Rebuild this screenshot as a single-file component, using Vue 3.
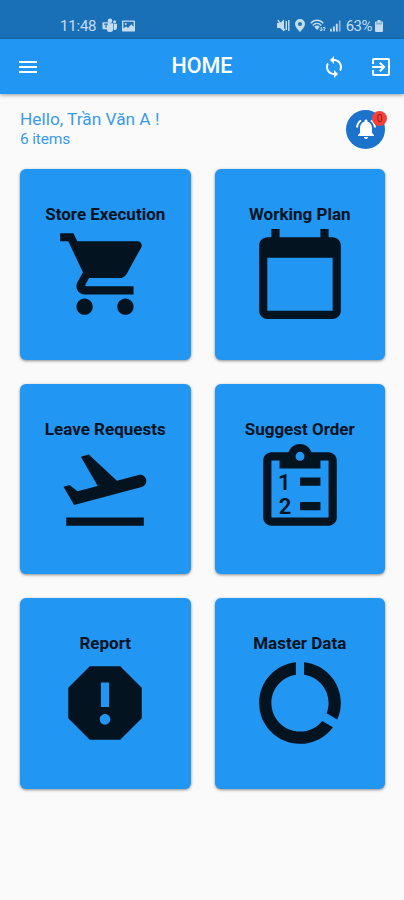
<template>
  <div class="home-page">
    <div class="status-bar">
      <div class="status-left">
        <span class="clock">11:48</span>
        <svg class="teams" viewBox="0 0 16 16">
          <circle cx="8.5" cy="3" r="2.4" />
          <circle cx="13.4" cy="4" r="1.6" />
          <path d="M5 5.6h7v6a3.6 3.6 0 0 1-7 1z" />
          <path d="M12.6 6.2H16v4.3a2.3 2.3 0 0 1-3.4 2z" />
          <rect x="0.5" y="4.5" width="7.5" height="7.5" rx="1" />
          <path class="teams-mark" d="M2.3 6.5h4M4.3 6.5v4" />
        </svg>
        <svg class="photo" viewBox="0 0 14 12">
          <path fill-rule="evenodd" d="M1 0h12a1 1 0 0 1 1 1v10a1 1 0 0 1-1 1H1a1 1 0 0 1-1-1V1a1 1 0 0 1 1-1zm.5 1.5v7l3-2 2 1.6 3.5-4 2.5 2.6V1.5z" />
          <circle cx="4" cy="3.8" r="1.1" />
        </svg>
      </div>
      <div class="status-right">
        <svg class="mute" viewBox="0 0 13 13">
          <path d="M0 4h3l4-3.5v12L3 9H0z" />
          <path class="line" d="M0.8 0.8l7 10.5M9.3 2v9M11.8 1v11" />
        </svg>
        <svg class="pin" viewBox="0 0 10 13">
          <path fill-rule="evenodd" d="M5 0a5 5 0 0 1 5 5c0 3.4-5 8-5 8S0 8.4 0 5a5 5 0 0 1 5-5zm0 3a2 2 0 1 0 0 4 2 2 0 0 0 0-4z" />
        </svg>
        <svg class="wifi" viewBox="0 0 16 13">
          <path class="line" d="M0.8 4.2C4.2.3 9.8.3 13.2 4.2M2.7 6.4c2.5-2.7 6.1-2.7 8.6 0" />
          <path d="M4.2 7.7c1.8-1.6 3.8-1.6 5.6 0L7 11z" />
          <path class="line thin" d="M11.2 8v4M9.7 10.5l1.5 1.5 1.3-1.5M14.2 12V8M12.9 9.4L14.2 8l1.4 1.4" />
        </svg>
        <svg class="signal" viewBox="0 0 12 12">
          <rect x="0" y="9" width="2" height="3" />
          <rect x="3.2" y="6.5" width="2" height="5.5" />
          <rect x="6.4" y="3.5" width="2" height="8.5" />
          <rect class="faint" x="9.6" y="0" width="2" height="12" />
        </svg>
        <span class="battery-text">63%</span>
        <svg class="battery" viewBox="0 0 8 12">
          <path d="M2.5 0h3v1.5H7a1 1 0 0 1 1 1V11a1 1 0 0 1-1 1H1a1 1 0 0 1-1-1V2.500a1 1 0 0 1 1-1h1.500z" />
          <path class="battery-gap" d="M1 2.500h6v2H1z" />
        </svg>
      </div>
    </div>

    <header class="app-bar">
      <svg class="bar-icon" viewBox="0 0 24 24"><path :d="icons.menu" /></svg>
      <h1>HOME</h1>
      <div class="actions">
        <svg class="bar-icon" viewBox="0 0 24 24"><path :d="icons.sync" /></svg>
        <svg class="bar-icon" viewBox="0 0 24 24"><path :d="icons.exit" /></svg>
      </div>
    </header>

    <section class="greeting">
      <div>
        <div class="hello">Hello, {{ userName }} !</div>
        <div class="count">{{ cards.length }} items</div>
      </div>
      <button class="bell">
        <svg viewBox="0 0 24 24"><path :d="icons.bell" /></svg>
        <span class="badge">{{ unread }}</span>
      </button>
    </section>

    <main class="grid">
      <div v-for="card in cards" :key="card.title" class="card">
        <h2>{{ card.title }}</h2>
        <svg class="card-icon" viewBox="0 0 24 24">
          <path fill-rule="evenodd" :d="icons[card.icon]" />
          <template v-if="card.icon === 'order'">
            <text x="6.6" y="12.2">1</text>
            <text x="6.8" y="18.2">2</text>
          </template>
        </svg>
      </div>
    </main>
  </div>
</template>

<script setup>
import { ref } from 'vue'

const userName = ref('Trần Văn A')
const unread = ref(0)

const cards = [
  { title: 'Store Execution', icon: 'cart' },
  { title: 'Working Plan', icon: 'calendar' },
  { title: 'Leave Requests', icon: 'takeoff' },
  { title: 'Suggest Order', icon: 'order' },
  { title: 'Report', icon: 'report' },
  { title: 'Master Data', icon: 'usage' }
]

const icons = {
  menu: 'M3 18h18v-2H3v2zm0-5h18v-2H3v2zm0-7v2h18V6H3z',
  sync: 'M12 4V1L8 5l4 4V6c3.31 0 6 2.69 6 6 0 1.01-.25 1.97-.7 2.8l1.46 1.46C19.54 15.03 20 13.57 20 12c0-4.42-3.58-8-8-8zm0 14c-3.31 0-6-2.69-6-6 0-1.01.25-1.97.7-2.8L5.24 7.74C4.46 8.97 4 10.43 4 12c0 4.42 3.58 8 8 8v3l4-4-4-4v3z',
  exit: 'M10.09 15.59L11.5 17l5-5-5-5-1.41 1.41L12.67 11H3v2h9.67l-2.58 2.59zM19 3H5c-1.11 0-2 .9-2 2v4h2V5h14v14H5v-4H3v4c0 1.1.89 2 2 2h14c1.1 0 2-.9 2-2V5c0-1.1-.9-2-2-2z',
  bell: 'M7.58 4.08L6.15 2.65C3.75 4.48 2.17 7.3 2.03 10.5h2c.15-2.65 1.51-4.97 3.55-6.42zm12.39 6.42h2c-.15-3.2-1.73-6.02-4.12-7.85l-1.42 1.43c2.02 1.45 3.39 3.77 3.54 6.42zM18 11c0-3.07-1.64-5.64-4.5-6.32V4c0-.83-.67-1.5-1.5-1.5s-1.5.67-1.5 1.5v.68C7.63 5.36 6 7.92 6 11v5l-2 2v1h16v-1l-2-2v-5zm-6 11c.14 0 .27-.01.4-.04.65-.14 1.18-.58 1.44-1.18.1-.24.15-.5.15-.78h-4c.01 1.1.9 2 2.01 2z',
  cart: 'M7 18c-1.1 0-1.99.9-1.99 2S5.9 22 7 22s2-.9 2-2-.9-2-2-2zM1 2v2h2l3.6 7.59-1.35 2.45c-.16.28-.25.61-.25.96 0 1.1.9 2 2 2h12v-2H7.42c-.14 0-.25-.11-.25-.25l.03-.12.9-1.63h7.45c.75 0 1.41-.41 1.75-1.03l3.58-6.49c.08-.14.12-.31.12-.48 0-.55-.45-1-1-1H5.21l-.94-2H1zm16 16c-1.1 0-1.99.9-1.99 2s.89 2 1.99 2 2-.9 2-2-.9-2-2-2z',
  calendar: 'M20 3h-1V1h-2v2H7V1H5v2H4c-1.1 0-2 .9-2 2v16c0 1.1.9 2 2 2h16c1.1 0 2-.9 2-2V5c0-1.1-.9-2-2-2zm0 18H4V8h16v13z',
  takeoff: 'M2.5 19h19v2h-19zm19.57-9.36c-.21-.8-1.04-1.28-1.84-1.06L14.92 10l-6.9-6.43-1.93.51 4.14 7.17-4.97 1.33-1.97-1.54-1.45.39 1.82 3.16.77 1.33 1.6-.43 5.31-1.42 4.35-1.16L21 11.49c.81-.23 1.28-1.05 1.07-1.85z',
  order: 'M19 3h-4.18C14.4 1.84 13.3 1 12 1s-2.4.84-2.82 2H5c-1.1 0-2 .9-2 2v14c0 1.1.9 2 2 2h14c1.1 0 2-.9 2-2V5c0-1.1-.9-2-2-2zM12 2.9a1.1 1.1 0 1 1 0 2.2 1.1 1.1 0 0 1 0-2.2zM5 5h2v2h10V5h2v14H5zM12 9.2h5v2h-5zM12 15.2h5v2h-5z',
  report: 'M15.73 3H8.27L3 8.27v7.46L8.27 21h7.46L21 15.73V8.27L15.73 3zM12 17.3c-.72 0-1.3-.58-1.3-1.3 0-.72.58-1.3 1.3-1.3.72 0 1.3.58 1.3 1.3 0 .72-.58 1.3-1.3 1.3zm1-4.3h-2V7h2v6z',
  usage: 'M13 2.05v3.03c3.39.49 6 3.39 6 6.92 0 .9-.18 1.75-.48 2.54l2.6 1.53c.56-1.24.88-2.62.88-4.07 0-5.18-3.95-9.45-9-9.95zM12 19c-3.87 0-7-3.13-7-7 0-3.53 2.61-6.43 6-6.92V2.05c-5.06.5-9 4.76-9 9.95 0 5.52 4.47 10 9.99 10 3.31 0 6.24-1.61 8.06-4.09l-2.6-1.53C16.17 17.98 14.21 19 12 19z'
}
</script>

<style>
body {
  background: #fafafa;
}
</style>

<style scoped>
.home-page {
  width: 404px;
  height: 900px;
  overflow: hidden;
  background: #fafafa;
  font-family: Roboto, "Liberation Sans", sans-serif;
}

.status-bar {
  display: flex;
  justify-content: space-between;
  box-sizing: border-box;
  height: 39px;
  padding: 13px 21px 0 60px;
  background: #1a70b7;
  color: #c5dcef;
  font-size: 15px;
}

.status-bar svg {
  fill: #c5dcef;
}

.status-left,
.status-right {
  display: flex;
  align-items: center;
  height: 25px;
}

.clock {
  width: 37px;
  letter-spacing: -0.2px;
}

.teams {
  width: 15px;
  height: 15px;
  margin-left: 5px;
}

.status-bar .teams-mark {
  fill: none;
  stroke: #1a70b7;
  stroke-width: 1.2;
}

.photo {
  width: 13px;
  height: 12px;
  margin-left: 5px;
}

.status-bar .line {
  fill: none;
  stroke: #c5dcef;
  stroke-width: 1.4;
}

.status-bar .thin {
  stroke-width: 1;
}

.mute {
  width: 13px;
  height: 13px;
}

.pin {
  width: 10px;
  height: 13px;
  margin-left: 5px;
}

.wifi {
  width: 16px;
  height: 13px;
  margin-left: 5px;
}

.signal {
  width: 11px;
  height: 12px;
  margin-left: 4px;
}

.faint {
  opacity: 0.6;
}

.battery-text {
  margin-left: 5px;
  letter-spacing: -0.5px;
}

.battery {
  width: 8px;
  height: 12px;
  margin-left: 3px;
}

.status-bar .battery-gap {
  fill: #1a70b7;
  opacity: 0.4;
}

.app-bar {
  display: grid;
  grid-template-columns: 1fr auto 1fr;
  align-items: center;
  box-sizing: border-box;
  height: 55px;
  padding: 0 11px 0 16px;
  background: #2196f3;
  box-shadow: 0 1px 4px rgba(0, 0, 0, 0.4);
}

.app-bar h1 {
  margin: 0 5px 2px 0;
  color: #fff;
  font-size: 21.5px;
  font-weight: 500;
}

.bar-icon {
  width: 24px;
  height: 24px;
  fill: #fff;
}

.actions {
  display: flex;
  justify-content: flex-end;
  gap: 23px;
}

.greeting {
  display: flex;
  justify-content: space-between;
  align-items: center;
  height: 70px;
  padding: 0 19px 0 20px;
  color: #3a9bea;
}

.hello {
  font-size: 17.3px;
  line-height: 21px;
}

.count {
  font-size: 15.5px;
  letter-spacing: -0.15px;
  line-height: 19px;
}

.bell {
  position: relative;
  display: flex;
  align-items: center;
  justify-content: center;
  width: 39px;
  height: 39px;
  padding: 0;
  border: none;
  border-radius: 50%;
  background: #1b73cc;
}

.bell svg {
  width: 24px;
  height: 24px;
  fill: #fff;
}

.badge {
  position: absolute;
  top: 1px;
  right: -2px;
  width: 15px;
  height: 15px;
  border-radius: 50%;
  background: #f4403a;
  color: #8a1714;
  font-size: 10px;
  line-height: 15px;
  text-align: center;
}

.grid {
  display: grid;
  grid-template-columns: 1fr 1fr;
  grid-auto-rows: 190.5px;
  gap: 24px;
  padding: 5px 19px 0 20px;
}

.card {
  display: flex;
  flex-direction: column;
  align-items: center;
  box-sizing: border-box;
  padding-top: 35px;
  border-radius: 6px;
  background: #2196f3;
  box-shadow: 0 1px 3px rgba(0, 0, 0, 0.45);
}

.card h2 {
  margin: 0 0 1px;
  color: #03131f;
  font-size: 17px;
  font-weight: 700;
  line-height: 20px;
}

.card-icon {
  width: 98px;
  height: 98px;
  flex-shrink: 0;
  fill: #03131f;
}

.card-icon text {
  font-size: 5.4px;
  font-weight: 600;
}
</style>
